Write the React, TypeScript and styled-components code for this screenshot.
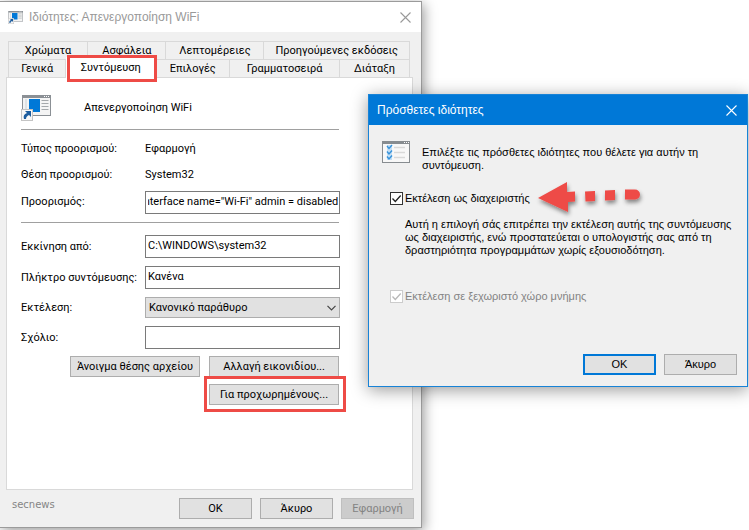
import React, { useEffect, useRef, useState } from "react";
import styled, { createGlobalStyle, css } from "styled-components";

const GlobalStyle = createGlobalStyle`
  *, *::before, *::after { box-sizing: border-box; }
  body { margin: 0; background: #fff; }
  button, input, select { font: inherit; color: inherit; margin: 0; }
`;

const Desktop = styled.main`
  display: grid;
  grid-template-columns: minmax(0, 368fr) minmax(0, 54fr) minmax(0, 326fr) minmax(0, 1fr);
  align-items: start;
  padding: 1px 0 2px;
  overflow: hidden;
  font: 11px/14px Roboto, "Liberation Sans", sans-serif;
  color: #000;
`;

const PropertiesWindow = styled.section`
  grid-area: 1 / 1 / 2 / 3;
  background: #f0f0f0;
  border: 1px solid #9b9b9b;
  border-left: 0;
  box-shadow: 2px 3px 12px rgba(0, 0, 0, 0.4);
`;

const DialogWindow = styled.section`
  grid-area: 1 / 2 / 2 / 4;
  z-index: 1;
  margin-top: 93px;
  background: #f0f0f0;
  border: 1px solid #1883d7;
  box-shadow: 0 3px 16px rgba(0, 0, 0, 0.4);
  font: 11px/13px "Liberation Sans", Arial, sans-serif;
`;

const TitleBar = styled.header<{ $active?: boolean }>`
  display: flex;
  align-items: center;
  gap: 6px;
  height: 30px;
  padding: 0 10px 0 8px;
  background: ${(p) => (p.$active ? "#0078d7" : "#fff")};
  color: ${(p) => (p.$active ? "#fff" : "#999")};
  font: 12px/16px "Liberation Sans", Arial, sans-serif;
`;

const Title = styled.h1`
  flex: 1;
  margin: 0;
  font: inherit;
  white-space: nowrap;
`;

const CloseButton = styled.button`
  display: flex;
  padding: 0;
  border: 0;
  background: none;
`;

const TabList = styled.div`
  margin: 9px 11px 0 8px;
`;

const TabRow = styled.div`
  display: flex;
  height: 18px;
  border-left: 1px solid #d9d9d9;
`;

const Tab = styled.button<{ $grow: number; $selected?: boolean }>`
  position: relative;
  flex: ${(p) => p.$grow} 1 0;
  min-width: 0;
  padding: 0;
  border: 1px solid #d9d9d9;
  border-width: 1px 1px 0 0;
  background: #f0f0f0;
  line-height: 16px;
  white-space: nowrap;
  ${(p) =>
    p.$selected &&
    css`
      z-index: 1;
      height: 21px;
      margin-top: -2px;
      background: #fff;
      border-color: #fff;
    `}
`;

const Marker = styled.span<{ $inset: string }>`
  position: absolute;
  z-index: 2;
  inset: ${(p) => p.$inset};
  border: 3px solid #ee4b46;
  pointer-events: none;
`;

const Panel = styled.div`
  min-height: 413px;
  margin: 0 8px 0 6px;
  padding: 16px 72px 16px 14px;
  background: #fff;
  border: 1px solid #d9d9d9;
`;

const Identity = styled.div`
  display: flex;
  align-items: center;
  gap: 33px;
  height: 28px;
`;

const Rule = styled.hr<{ $gap: string }>`
  height: 1px;
  margin: ${(p) => p.$gap};
  border: 0;
  background: #a0a0a0;
`;

const Field = styled.div<{ $height: number }>`
  display: grid;
  grid-template-columns: 124px minmax(0, 1fr);
  align-items: center;
  height: ${(p) => p.$height}px;
  white-space: nowrap;
`;

const Stack = styled.div`
  display: grid;
  gap: 8px;
`;

const TextBox = styled.input`
  width: 100%;
  height: 23px;
  padding: 0 1px 2px 2px;
  border: 1px solid #7a7a7a;
  border-radius: 0;
  background: #fff;
`;

const SelectWrap = styled.div`
  display: grid;
  align-items: center;
  & > * { grid-area: 1 / 1; }
  & > svg { justify-self: end; margin-right: 4px; pointer-events: none; }
`;

const Select = styled.select`
  appearance: none;
  width: 100%;
  height: 21px;
  padding: 0 20px 0 3px;
  border: 1px solid #adadad;
  border-radius: 0;
  background: #e1e1e1;
`;

const Actions = styled.div`
  display: grid;
  grid-template-columns: 130px 130px;
  justify-content: end;
  gap: 7px 9px;
  margin: 7px 1px 0 0;
`;

const MarkedCell = styled.div`
  position: relative;
  display: grid;
  grid-column: 2;
`;

const Button = styled.button<{ $default?: boolean }>`
  height: 21px;
  padding: 0;
  border: ${(p) => (p.$default ? "2px solid #0078d7" : "1px solid #adadad")};
  background: #e1e1e1;
  white-space: nowrap;
  &:disabled {
    background: #ccc;
    border-color: #bfbfbf;
    color: #838383;
  }
`;

const Footer = styled.footer`
  display: flex;
  align-items: flex-start;
  gap: 8px;
  padding: 8px 7px 8px 12px;
  & > button { width: 73px; }
`;

const Watermark = styled.small`
  flex: 1;
  font: 10px/13px "DejaVu Sans", sans-serif;
  color: #858585;
`;

const DialogBody = styled.div`
  display: grid;
  grid-template-columns: 28px minmax(0, 1fr);
  column-gap: 12px;
  padding: 16px 8px 0 13px;
`;

const Paragraph = styled.p`
  margin: 5px 0 0;
`;

const Options = styled.div`
  padding: 20px 10px 0 21px;
`;

const OptionRow = styled.div`
  display: flex;
  align-items: center;
  gap: 8px;
  height: 13px;
`;

const CheckLabel = styled.label<{ $disabled?: boolean }>`
  display: grid;
  grid-template-columns: 13px auto;
  align-items: center;
  column-gap: 2px;
  color: ${(p) => (p.$disabled ? "#838383" : "#000")};
  white-space: nowrap;
  & > svg { grid-area: 1 / 1; pointer-events: none; }
`;

const CheckInput = styled.input`
  grid-area: 1 / 1;
  appearance: none;
  width: 13px;
  height: 13px;
  border: 1px solid #333;
  background: #fff;
  &:disabled { border-color: #ccc; }
`;

const Hint = styled.p`
  margin: 13px 0 33px 15px;
`;

const DialogFooter = styled.footer`
  display: flex;
  justify-content: flex-end;
  gap: 8px;
  padding: 51px 10px 11px;
  & > button { width: 73px; }
`;

const CloseIcon = () => (
  <svg width="11" height="11" viewBox="0 0 11 11" stroke="currentColor" strokeWidth="1.1">
    <path d="M.5.5l10 10M10.5.5l-10 10" />
  </svg>
);

const ShortcutIcon = ({ width, height }: { width: number; height: number }) => (
  <svg width={width} height={height} viewBox="0 0 30 26">
    <rect x="1.5" y=".5" width="28" height="20" fill="#f4f4f4" stroke="#8b9095" />
    <path d="M1 0h29v3H1z" fill="#8b9095" />
    <path d="M23 1.5h1M25 1.5h1M27 1.5h1" stroke="#fff" />
    <path d="M4 4h2v14H4z" fill="#dfe3e6" />
    <path d="M8 4h11v13H8z" fill="#0078d7" />
    <path d="M20.500 5.500h7M20.500 8.500h7M20.500 11.500h7M20.500 14.500h7" stroke="#a4a8ab" />
    <rect x=".5" y="14.500" width="11" height="11" fill="#f7f7f7" stroke="#c4c4c4" />
    <path d="M4 16h6v6l-2-2c-2 1-3 2-3 4H3c-1-3 0-5 3-6z" fill="#1c5c9e" />
  </svg>
);

const ChecklistIcon = () => (
  <svg width="28" height="22" viewBox="0 0 28 22" fill="none">
    <rect x=".5" y=".5" width="27" height="21" fill="#f8f8f8" stroke="#878c90" />
    <path d="M0 0h28v3H0z" fill="#878c90" />
    <path d="M22 1.500h1M24 1.500h1M26 1.500h1" stroke="#fff" />
    <path d="M5 4h5v15H5z" fill="#c3def4" />
    <path d="M5 5l2 2.500L10 4M5 10.500L7 13l3-3.500M5 15.500l2 2.500 3-3.500" stroke="#3793da" strokeWidth="1.400" />
    <path d="M12 6.500h11M12 11.500h11M12 16.500h11" stroke="#d9d9d9" strokeWidth="1.500" />
  </svg>
);

const ArrowMark = () => (
  <svg width="108" height="38" viewBox="0 0 108 38" overflow="visible">
    <defs>
      <filter id="arrow-shadow" x="-10%" y="-20%" width="120%" height="160%">
        <feDropShadow dx="1" dy="3" stdDeviation="2" floodOpacity=".45" />
      </filter>
    </defs>
    <g fill="#ee4b46" filter="url(#arrow-shadow)">
      <path d="M0 18L29 2v10l8-.5v10l-7 .5v10z" />
      <path d="M47 11.500l10-.5v10l-9.500.5zM67 10.500l10-.5v10l-10 .5zM87 9.500h10a5 5 0 0 1 0 10H87z" />
    </g>
  </svg>
);

interface CheckOptionProps {
  label: string;
  disabled?: boolean;
}

function CheckOption({ label, disabled }: CheckOptionProps) {
  const [checked, setChecked] = useState(true);
  return (
    <CheckLabel $disabled={disabled}>
      <CheckInput
        type="checkbox"
        checked={checked}
        disabled={disabled}
        onChange={(e) => setChecked(e.target.checked)}
      />
      {checked && (
        <svg width="13" height="13" viewBox="0 0 13 13" fill="none">
          <path d="M2.500 6.500l2.800 3 5.400-6" stroke={disabled ? "#b8b8b8" : "#222"} strokeWidth="1.300" />
        </svg>
      )}
      <span>{label}</span>
    </CheckLabel>
  );
}

const BACK_TABS = [
  { label: "Χρώματα", grow: 79 },
  { label: "Ασφάλεια", grow: 78 },
  { label: "Λεπτομέρειες", grow: 98 },
  { label: "Προηγούμενες εκδόσεις", grow: 146 },
];

const FRONT_TABS = [
  { label: "Γενικά", grow: 57 },
  { label: "Συντόμευση", grow: 90 },
  { label: "Επιλογές", grow: 74 },
  { label: "Γραμματοσειρά", grow: 110 },
  { label: "Διάταξη", grow: 70 },
];

function ShortcutProperties() {
  const target = useRef<HTMLInputElement>(null);
  useEffect(() => {
    if (target.current) target.current.scrollLeft = target.current.scrollWidth;
  }, []);

  return (
    <PropertiesWindow aria-label="Ιδιότητες">
      <TitleBar>
        <ShortcutIcon width={15} height={13} />
        <Title>Ιδιότητες: Απενεργοποίηση WiFi</Title>
        <CloseButton aria-label="Κλείσιμο">
          <CloseIcon />
        </CloseButton>
      </TitleBar>
      <TabList role="tablist">
        <TabRow>
          {BACK_TABS.map((t) => (
            <Tab key={t.label} role="tab" $grow={t.grow}>
              {t.label}
            </Tab>
          ))}
        </TabRow>
        <TabRow>
          {FRONT_TABS.map((t) => {
            const selected = t.label === "Συντόμευση";
            return (
              <Tab key={t.label} role="tab" aria-selected={selected} $grow={t.grow} $selected={selected}>
                {t.label}
                {selected && <Marker $inset="-3px -2px -4px 1px" />}
              </Tab>
            );
          })}
        </TabRow>
      </TabList>
      <Panel role="tabpanel">
        <Identity>
          <ShortcutIcon width={30} height={26} />
          <span>Απενεργοποίηση WiFi</span>
        </Identity>
        <Rule $gap="7px 1px 6px 0" />
        <Field $height={26}>
          <span>Τύπος προορισμού:</span>
          <span>Εφαρμογή</span>
        </Field>
        <Field $height={26}>
          <span>Θέση προορισμού:</span>
          <span>System32</span>
        </Field>
        <Field $height={28}>
          <label htmlFor="target">Προορισμός:</label>
          <TextBox id="target" ref={target} defaultValue={'interface name="Wi-Fi" admin = disabled'} />
        </Field>
        <Rule $gap="6px 1px 12px 0" />
        <Stack>
          <Field $height={23}>
            <label htmlFor="start-in">Εκκίνηση από:</label>
            <TextBox id="start-in" defaultValue="C:\WINDOWS\system32" />
          </Field>
          <Field $height={23}>
            <label htmlFor="hotkey">Πλήκτρο συντόμευσης:</label>
            <TextBox id="hotkey" defaultValue="Κανένα" />
          </Field>
          <Field $height={21}>
            <label htmlFor="run">Εκτέλεση:</label>
            <SelectWrap>
              <Select id="run">
                <option>Κανονικό παράθυρο</option>
              </Select>
              <svg width="9" height="6" viewBox="0 0 9 6" fill="none" stroke="#444" strokeWidth="1.200">
                <path d="M.5.8l4 4 4-4" />
              </svg>
            </SelectWrap>
          </Field>
          <Field $height={23}>
            <label htmlFor="comment">Σχόλιο:</label>
            <TextBox id="comment" />
          </Field>
        </Stack>
        <Actions>
          <Button>Άνοιγμα θέσης αρχείου</Button>
          <Button>Αλλαγή εικονιδίου...</Button>
          <MarkedCell>
            <Button>Για προχωρημένους...</Button>
            <Marker $inset="-8px -7px -7px -5px" />
          </MarkedCell>
        </Actions>
      </Panel>
      <Footer>
        <Watermark>secnews</Watermark>
        <Button>OK</Button>
        <Button>Άκυρο</Button>
        <Button disabled>Εφαρμογή</Button>
      </Footer>
    </PropertiesWindow>
  );
}

function AdvancedDialog() {
  return (
    <DialogWindow role="dialog" aria-label="Πρόσθετες ιδιότητες">
      <TitleBar $active>
        <Title>Πρόσθετες ιδιότητες</Title>
        <CloseButton aria-label="Κλείσιμο">
          <CloseIcon />
        </CloseButton>
      </TitleBar>
      <DialogBody>
        <ChecklistIcon />
        <Paragraph>Επιλέξτε τις πρόσθετες ιδιότητες που θέλετε για αυτήν τη συντόμευση.</Paragraph>
      </DialogBody>
      <Options>
        <OptionRow>
          <CheckOption label="Εκτέλεση ως διαχειριστής" />
          <ArrowMark />
        </OptionRow>
        <Hint>
          Αυτή η επιλογή σάς επιτρέπει την εκτέλεση αυτής της συντόμευσης ως διαχειριστής, ενώ
          προστατεύεται ο υπολογιστής σας από τη δραστηριότητα προγραμμάτων χωρίς εξουσιοδότηση.
        </Hint>
        <OptionRow>
          <CheckOption label="Εκτέλεση σε ξεχωριστό χώρο μνήμης" disabled />
        </OptionRow>
      </Options>
      <DialogFooter>
        <Button $default>OK</Button>
        <Button>Άκυρο</Button>
      </DialogFooter>
    </DialogWindow>
  );
}

export default function App() {
  return (
    <>
      <GlobalStyle />
      <Desktop>
        <ShortcutProperties />
        <AdvancedDialog />
      </Desktop>
    </>
  );
}
